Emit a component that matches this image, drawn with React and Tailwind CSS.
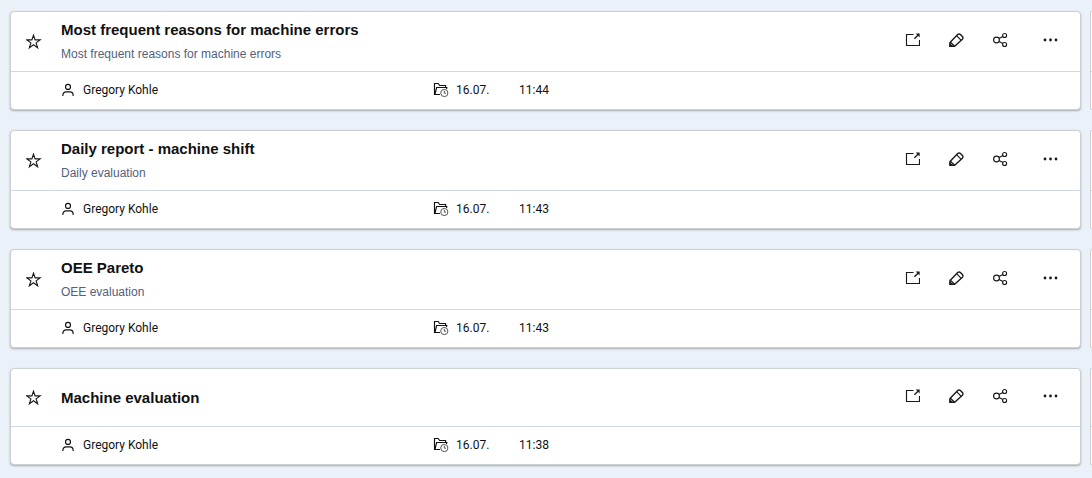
import React from "react";

const REPORTS = [
  {
    id: 1,
    title: "Most frequent reasons for machine errors",
    description: "Most frequent reasons for machine errors",
    author: "Gregory Kohle",
    date: "16.07.",
    time: "11:44",
  },
  {
    id: 2,
    title: "Daily report - machine shift",
    description: "Daily evaluation",
    author: "Gregory Kohle",
    date: "16.07.",
    time: "11:43",
  },
  {
    id: 3,
    title: "OEE Pareto",
    description: "OEE evaluation",
    author: "Gregory Kohle",
    date: "16.07.",
    time: "11:43",
  },
  {
    id: 4,
    title: "Machine evaluation",
    author: "Gregory Kohle",
    date: "16.07.",
    time: "11:38",
  },
];

function Icon({ children }) {
  return (
    <svg
      width="16"
      height="16"
      viewBox="0 0 16 16"
      fill="none"
      stroke="currentColor"
      strokeWidth="1.15"
      className="flex-shrink-0"
      aria-hidden="true"
    >
      {children}
    </svg>
  );
}

const StarIcon = () => (
  <Icon>
    <path d="M7.5 1.2 9.1 5.9h5l-4 3 1.5 4.8-4.1-2.9-4.1 2.9 1.5-4.8-4-3h5z" strokeWidth="1.15" />
  </Icon>
);

const UserIcon = () => (
  <Icon>
    <circle cx="8" cy="4.9" r="2.5" />
    <path d="M2.9 14v-1a3.2 3.2 0 0 1 3.2-3.2h3.8a3.2 3.2 0 0 1 3.2 3.2v1" />
  </Icon>
);

const FolderClockIcon = () => (
  <Icon>
    <path d="M7 12.5H1.5v-11h3.7l1.4 2h6v2M2 12.3l1.6-6.8h10.2l-.2 1.5" />
    <g stroke="#555" strokeWidth="1">
      <circle cx="11.3" cy="11" r="3.6" fill="white" />
      <path d="M11.3 8.8v2.4h1.7" />
    </g>
  </Icon>
);

const OpenIcon = () => (
  <Icon>
    <path d="M9.5 2.5h-7v11h13V8" />
    <path d="M10.4 6.8 15 2.2" strokeWidth="1.3" />
    <path d="M11.8 1.6h3.8v3.8z" fill="currentColor" stroke="none" />
  </Icon>
);

const EditIcon = () => (
  <Icon>
    <path
      d="M2 14.3v-3.9l7.7-7.9a1.9 1.9 0 0 1 2.7 0l2 2a1.9 1.9 0 0 1 0 2.7l-7.7 7.1z"
      strokeWidth="1.4"
      strokeLinejoin="round"
    />
    <path d="m8.6 3.7 4.6 4.6M2.4 10.2l4.2 4" strokeWidth="1.2" />
    <path d="M2 12.2v2.1h2.2z" fill="currentColor" />
  </Icon>
);

const ShareIcon = () => (
  <Icon>
    <circle cx="4.5" cy="8" r="2.9" />
    <circle cx="12.6" cy="3.5" r="2" />
    <circle cx="12.6" cy="12.5" r="2" />
    <path d="m7 6.6 3.9-2.2M7 9.4l3.9 2.2" />
  </Icon>
);

const MoreIcon = () => (
  <Icon>
    <g fill="currentColor" stroke="none">
      <circle cx="3" cy="8" r="1.4" />
      <circle cx="8.5" cy="8" r="1.4" />
      <circle cx="14" cy="8" r="1.4" />
    </g>
  </Icon>
);

function ReportCard({ report }) {
  return (
    <article className="min-w-0 rounded-[4px] border border-[#cdd0d3] bg-white shadow-[0_1px_2px_#0000004d]">
      <header
        className={`flex items-center border-b border-[#d0dae4] pl-[15px] pr-[22px] ${
          report.description ? "h-[60px]" : "h-[58px]"
        }`}
      >
        <button aria-label="Add to favorites">
          <StarIcon />
        </button>
        <div className="ml-[19px] min-w-0 flex-1">
          <h2 className="truncate text-[15px] font-bold leading-6 text-[#111]">{report.title}</h2>
          {report.description && (
            <p className="truncate text-xs leading-6 text-[#53617c]">{report.description}</p>
          )}
        </div>
        <div className="flex items-center pb-[3px]">
          <button aria-label="Open" className="mr-7">
            <OpenIcon />
          </button>
          <button aria-label="Edit" className="mr-7">
            <EditIcon />
          </button>
          <button aria-label="Share" className="mr-[34px]">
            <ShareIcon />
          </button>
          <button aria-label="More">
            <MoreIcon />
          </button>
        </div>
      </header>
      <footer className="flex h-[37px] items-center pb-[2px] pl-[49px] font-['Roboto',sans-serif] text-xs text-[#111]">
        <div className="flex w-[373px] items-center gap-[7px]">
          <UserIcon />
          <span>{report.author}</span>
        </div>
        <div className="flex items-center gap-[7px]">
          <FolderClockIcon />
          <time className="w-14">{report.date}</time>
          <time>{report.time}</time>
        </div>
      </footer>
    </article>
  );
}

// First pixels of the neighbouring column that continues past the window edge
function NextColumnCard({ tall }) {
  return (
    <div className="overflow-hidden rounded-l-[2px] border-y border-l border-[#cdd0d3] bg-white" aria-hidden="true">
      <div className={`border-b border-[#d0dae4] ${tall ? "h-[60px]" : "h-[58px]"}`} />
    </div>
  );
}

export default function App() {
  return (
    <main className="min-h-screen bg-[#eaf1f8] pt-[11px] pb-3 pl-[10px] font-['Liberation_Sans',Arial,sans-serif] text-[#1a1a1a]">
      <div className="grid grid-cols-[minmax(0,1fr)_2px] gap-x-[9px] gap-y-5">
        {REPORTS.map((report) => (
          <React.Fragment key={report.id}>
            <ReportCard report={report} />
            <NextColumnCard tall={Boolean(report.description)} />
          </React.Fragment>
        ))}
      </div>
    </main>
  );
}
